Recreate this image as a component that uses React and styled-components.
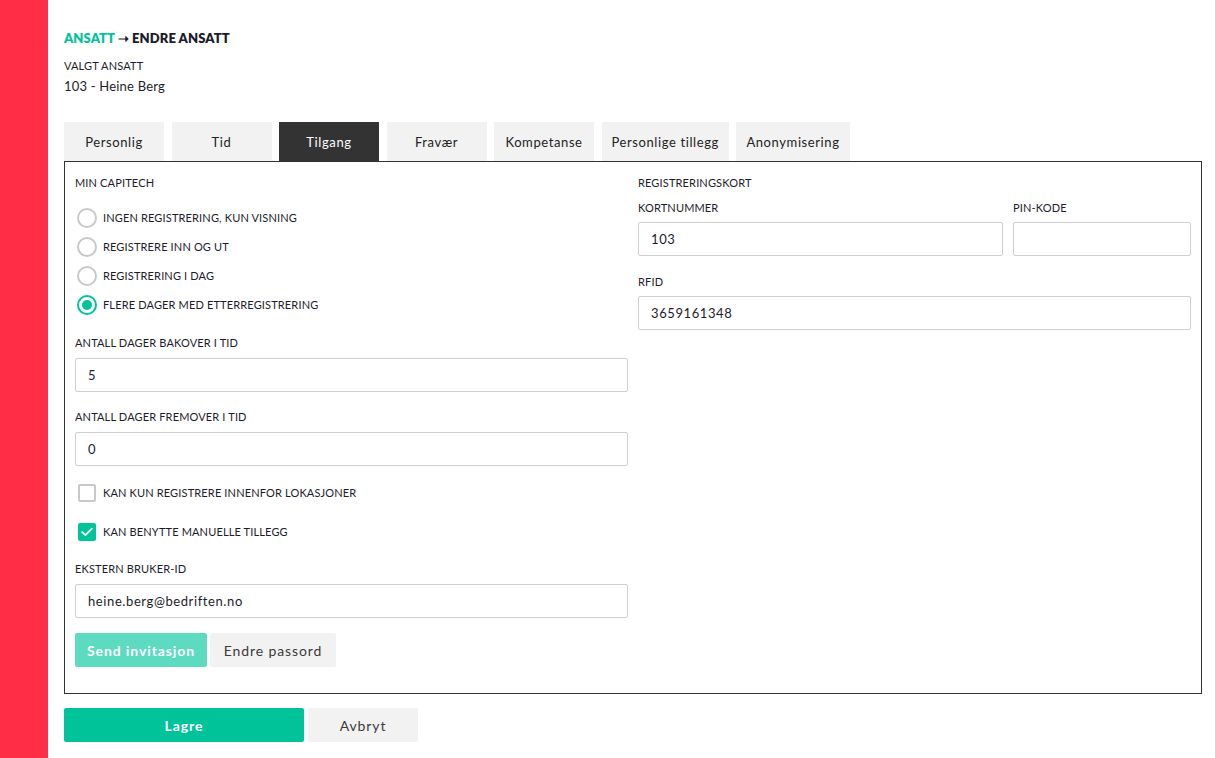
import React from "react";
import styled, { createGlobalStyle } from "styled-components";

const GREEN = "#00c39a";
const TEXT = "#1c1c2b";

const Global = createGlobalStyle`
  html, body { margin: 0; padding: 0; background: #fff; }
  body { font-family: Lato, "Open Sans", Arial, sans-serif; color: ${TEXT}; }
  * { box-sizing: border-box; }
`;

const Page = styled.div`
  display: flex;
  min-height: 758px;
`;

const Sidebar = styled.div`
  width: 48px;
  flex: 0 0 48px;
  background: #ff2d46;
`;

const Main = styled.main`
  flex: 1;
  padding: 30px 13px 0 16px;
`;

const Breadcrumb = styled.div`
  font-size: 13px;
  line-height: 16px;
  font-weight: 800;
  letter-spacing: 0.1px;
  color: ${TEXT};
`;

const Crumb = styled.span`
  color: ${GREEN};
`;

const SmallCaps = styled.div`
  font-size: 11px;
  line-height: 14px;
  letter-spacing: 0.15px;
  text-transform: uppercase;
  color: ${TEXT};
  margin-top: ${(p) => p.$mt || 0}px;
  margin-bottom: ${(p) => p.$mb || 0}px;
`;

const Name = styled.div`
  font-size: 13px;
  line-height: 16px;
  letter-spacing: 0.2px;
  margin-top: 5px;
`;

const Tabs = styled.nav`
  display: flex;
  gap: 7.5px;
  margin-top: 28px;
`;

const Tab = styled.button`
  min-width: 100px;
  height: 39px;
  padding: 0 10px;
  border: none;
  border-radius: 0;
  font-family: inherit;
  font-size: 13px;
  letter-spacing: 0.6px;
  background: ${(p) => (p.$active ? "#333333" : "#f2f2f2")};
  color: ${(p) => (p.$active ? "#ffffff" : "#222")};
  cursor: pointer;
`;

const Panel = styled.section`
  border: 1px solid #333;
  padding: 14px 10px 26px;
  display: grid;
  grid-template-columns: 1fr 1fr;
  column-gap: 10px;
  align-items: start;
`;

const Column = styled.div`
  display: flex;
  flex-direction: column;
`;

const RadioList = styled.div`
  display: flex;
  flex-direction: column;
  margin-top: 13px;
`;

const OptionRow = styled.label`
  display: flex;
  align-items: center;
  height: 29px;
  gap: 6px;
  padding-left: 2px;
  font-size: 11px;
  letter-spacing: 0.15px;
  text-transform: uppercase;
  cursor: pointer;
  margin-top: ${(p) => p.$mt || 0}px;
`;

const RadioCircle = styled.span`
  width: 20px;
  height: 20px;
  border-radius: 50%;
  border: 2px solid ${(p) => (p.$checked ? GREEN : "#c8c8c8")};
  display: flex;
  align-items: center;
  justify-content: center;
  flex: 0 0 20px;
  &::after {
    content: "";
    width: 10px;
    height: 10px;
    border-radius: 50%;
    background: ${(p) => (p.$checked ? GREEN : "transparent")};
  }
`;

const CheckBox = styled.span`
  width: 18px;
  height: 18px;
  margin-left: 1px;
  margin-right: 1px;
  flex: 0 0 18px;
  border-radius: 2px;
  border: 2px solid ${(p) => (p.$checked ? GREEN : "#c8c8c8")};
  background: ${(p) => (p.$checked ? GREEN : "#fff")};
  display: flex;
  align-items: center;
  justify-content: center;
`;

const Field = styled.div`
  display: flex;
  flex-direction: column;
  margin-top: ${(p) => p.$mt || 0}px;
  min-width: 0;
`;

const Input = styled.input`
  height: 34px;
  width: 100%;
  border: 1px solid #cfcfcf;
  border-radius: 2px;
  padding: 0 12px;
  font-family: inherit;
  font-size: 13px;
  letter-spacing: 0.6px;
  color: ${TEXT};
  background: #fff;
  outline: none;
`;

const FieldRow = styled.div`
  display: grid;
  grid-template-columns: 365px 1fr;
  column-gap: 10px;
  margin-top: 11px;
`;

const ButtonRow = styled.div`
  display: flex;
  gap: ${(p) => p.$gap || 3}px;
  margin-top: ${(p) => p.$mt || 0}px;
`;

const Button = styled.button`
  height: 34px;
  width: ${(p) => p.$w}px;
  border: none;
  border-radius: 2px;
  font-family: inherit;
  font-size: 14px;
  letter-spacing: 0.9px;
  font-weight: ${(p) => (p.$variant === "secondary" ? 400 : 700)};
  background: ${(p) =>
    p.$variant === "primary" ? GREEN : p.$variant === "light" ? "#5cdbc1" : "#f2f2f2"};
  color: ${(p) => (p.$variant === "secondary" ? "#3a3a3a" : "#fff")};
  cursor: pointer;
`;

const tabs = ["Personlig", "Tid", "Tilgang", "Fravær", "Kompetanse", "Personlige tillegg", "Anonymisering"];
const radios = [
  "Ingen registrering, kun visning",
  "Registrere inn og ut",
  "Registrering i dag",
  "Flere dager med etterregistrering",
];

function Check() {
  return (
    <svg width="12" height="10" viewBox="0 0 12 10" fill="none">
      <path d="M1.2 5.2 L4.4 8.2 L10.8 1.6" stroke="#fff" strokeWidth="1.8" strokeLinecap="round" strokeLinejoin="round" />
    </svg>
  );
}

export default function App() {
  return (
    <>
      <Global />
      <Page>
        <Sidebar />
        <Main>
          <Breadcrumb>
            <Crumb>ANSATT</Crumb> ➝ ENDRE ANSATT
          </Breadcrumb>
          <SmallCaps $mt={13}>Valgt ansatt</SmallCaps>
          <Name>103 - Heine Berg</Name>

          <Tabs>
            {tabs.map((t) => (
              <Tab key={t} $active={t === "Tilgang"}>
                {t}
              </Tab>
            ))}
          </Tabs>

          <Panel>
            <Column>
              <SmallCaps>Min Capitech</SmallCaps>
              <RadioList>
                {radios.map((r, i) => (
                  <OptionRow key={r}>
                    <RadioCircle $checked={i === 3} />
                    {r}
                  </OptionRow>
                ))}
              </RadioList>

              <Field $mt={17}>
                <SmallCaps $mb={8}>Antall dager bakover i tid</SmallCaps>
                <Input defaultValue="5" />
              </Field>
              <Field $mt={18}>
                <SmallCaps $mb={8}>Antall dager fremover i tid</SmallCaps>
                <Input defaultValue="0" />
              </Field>

              <OptionRow $mt={12}>
                <CheckBox />
                Kan kun registrere innenfor lokasjoner
              </OptionRow>
              <OptionRow $mt={10}>
                <CheckBox $checked>
                  <Check />
                </CheckBox>
                Kan benytte manuelle tillegg
              </OptionRow>

              <Field $mt={16}>
                <SmallCaps $mb={8}>Ekstern bruker-ID</SmallCaps>
                <Input defaultValue="heine.berg@bedriften.no" />
              </Field>

              <ButtonRow $mt={15} $gap={3}>
                <Button $variant="light" $w={132}>Send invitasjon</Button>
                <Button $variant="secondary" $w={126}>Endre passord</Button>
              </ButtonRow>
            </Column>

            <Column>
              <SmallCaps>Registreringskort</SmallCaps>
              <FieldRow>
                <Field>
                  <SmallCaps $mb={7}>Kortnummer</SmallCaps>
                  <Input defaultValue="103" />
                </Field>
                <Field>
                  <SmallCaps $mb={7}>PIN-kode</SmallCaps>
                  <Input />
                </Field>
              </FieldRow>
              <Field $mt={19}>
                <SmallCaps $mb={7}>RFID</SmallCaps>
                <Input defaultValue="3659161348" />
              </Field>
            </Column>
          </Panel>

          <ButtonRow $mt={14} $gap={4}>
            <Button $variant="primary" $w={240}>Lagre</Button>
            <Button $variant="secondary" $w={110}>Avbryt</Button>
          </ButtonRow>
        </Main>
      </Page>
    </>
  );
}
